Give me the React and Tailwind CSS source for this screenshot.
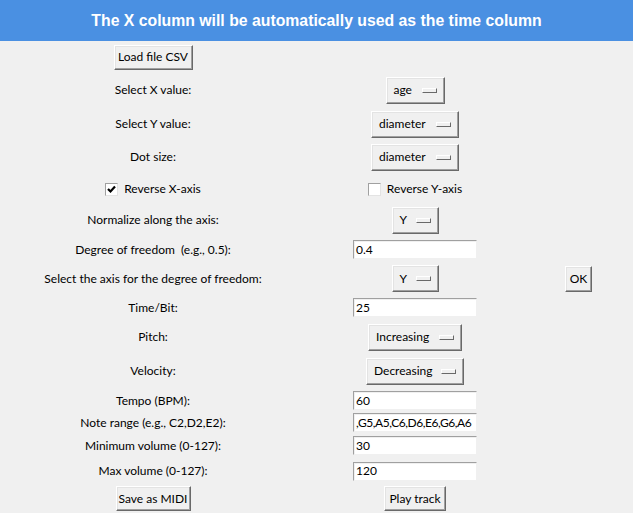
import React from "react";

const font = { fontFamily: "Lato, 'Liberation Sans', sans-serif" };

function TkButton({ children, w }) {
  return (
    <div
      className="flex items-center justify-center h-[25px] bg-[#f0f0f0] border border-t-white border-l-white border-r-[#696969] border-b-[#696969] shadow-[inset_-1px_-1px_0_#a0a0a0,inset_1px_1px_0_#e3e3e3] text-[12px] text-black"
      style={{ width: w }}
    >
      {children}
    </div>
  );
}

function Indicator() {
  return (
    <div className="w-[15px] h-[5px] bg-[#f0f0f0] border border-t-white border-l-white border-r-[#696969] border-b-[#696969]" />
  );
}

function TkMenu({ children, w }) {
  return (
    <div
      className="flex items-center justify-between pl-[7px] pr-[7px] h-[27px] bg-[#f0f0f0] border border-t-white border-l-white border-r-[#696969] border-b-[#696969] shadow-[inset_-1px_-1px_0_#a0a0a0,inset_1px_1px_0_#e3e3e3] text-[12px] text-black"
      style={{ width: w }}
    >
      <span>{children}</span>
      <Indicator />
    </div>
  );
}

function TkEntry({ value, tight }) {
  return (
    <div
      className={
        "w-[124px] h-[19px] bg-white border border-t-[#a0a0a0] border-l-[#a0a0a0] border-r-[#f0f0f0] border-b-[#f0f0f0] shadow-[inset_1px_1px_0_#f0f0f0] flex items-center pl-[2px] text-[12px] text-black overflow-hidden whitespace-nowrap " +
        (tight ? "tracking-[-0.45px]" : "")
      }
    >
      {value}
    </div>
  );
}

function TkCheck({ checked, label }) {
  return (
    <div className="flex items-center gap-[6px] text-[12px] text-black">
      <div className="w-[13px] h-[13px] bg-white border border-t-[#a0a0a0] border-l-[#a0a0a0] border-r-[#e3e3e3] border-b-[#e3e3e3] flex items-center justify-center">
        {checked && (
          <svg width="9" height="9" viewBox="0 0 9 9">
            <path d="M1 4 L3.5 6.5 L8 1.5" stroke="#000" strokeWidth="2.2" fill="none" />
          </svg>
        )}
      </div>
      <span>{label}</span>
    </div>
  );
}

function Label({ children }) {
  return <span className="text-[12px] text-black whitespace-pre">{children}</span>;
}

const okButton = (
  <div className="h-[26px] w-[27px] flex items-center justify-center bg-[#f0f0f0] border border-t-white border-l-white border-r-[#696969] border-b-[#696969] shadow-[inset_-1px_-1px_0_#a0a0a0,inset_1px_1px_0_#e3e3e3] text-[12px] text-black">
    OK
  </div>
);

const rows = [
  { h: "h-[32px]", c0: <TkButton w={79}>Load file CSV</TkButton> },
  { h: "h-[34px]", c0: <Label>Select X value:</Label>, c1: <TkMenu w={59}>age</TkMenu> },
  { h: "h-[34px]", c0: <Label>Select Y value:</Label>, c1: <TkMenu w={88}>diameter</TkMenu> },
  { h: "h-[32px]", c0: <Label>Dot size:</Label>, c1: <TkMenu w={88}>diameter</TkMenu> },
  { h: "h-[32px]", c0: <TkCheck checked label="Reverse X-axis" />, c1: <TkCheck label="Reverse Y-axis" /> },
  { h: "h-[30px]", c0: <Label>Normalize along the axis:</Label>, c1: <TkMenu w={47}>Y</TkMenu> },
  { h: "h-[29px]", c0: <Label>{"Degree of freedom  (e.g., 0.5):"}</Label>, c1: <TkEntry value="0.4" /> },
  {
    h: "h-[29px]",
    c0: <Label>Select the axis for the degree of freedom:</Label>,
    c1: <TkMenu w={47}>Y</TkMenu>,
    c2: okButton,
  },
  { h: "h-[29px]", c0: <Label>Time/Bit:</Label>, c1: <TkEntry value="25" /> },
  { h: "h-[30px]", c0: <Label>Pitch:</Label>, c1: <TkMenu w={94}>Increasing</TkMenu> },
  { h: "h-[38px]", c0: <Label>Velocity:</Label>, c1: <TkMenu w={98}>Decreasing</TkMenu> },
  { h: "h-[21px]", c0: <Label>Tempo (BPM):</Label>, c1: <TkEntry value="60" /> },
  { h: "h-[23px]", c0: <Label>Note range (e.g., C2,D2,E2):</Label>, c1: <TkEntry tight value=",G5,A5,C6,D6,E6,G6,A6" /> },
  { h: "h-[23px]", c0: <Label>Minimum volume (0-127):</Label>, c1: <TkEntry value="30" /> },
  { h: "h-[28px]", c0: <Label>Max volume (0-127):</Label>, c1: <TkEntry value="120" /> },
  { h: "h-[27px]", c0: <TkButton w={75}>Save as MIDI</TkButton>, c1: <TkButton w={62}>Play track</TkButton> },
];

export default function App() {
  return (
    <div className="w-[633px] h-[513px] bg-[#f0f0f0] overflow-hidden" style={font}>
      <div
        className="h-[41px] bg-[#4a90e2] flex items-center justify-center text-white font-bold text-[15.8px]"
        style={{ fontFamily: "'Liberation Sans', Arial, sans-serif" }}
      >
        The X column will be automatically used as the time column
      </div>
      {rows.map((r, i) => (
        <div key={i} className={`grid grid-cols-[306px_218px_1fr] items-center justify-items-center ${r.h}`}>
          <div className="flex justify-center">{r.c0}</div>
          <div className="flex justify-center">{r.c1}</div>
          <div className="flex justify-center">{r.c2}</div>
        </div>
      ))}
    </div>
  );
}
